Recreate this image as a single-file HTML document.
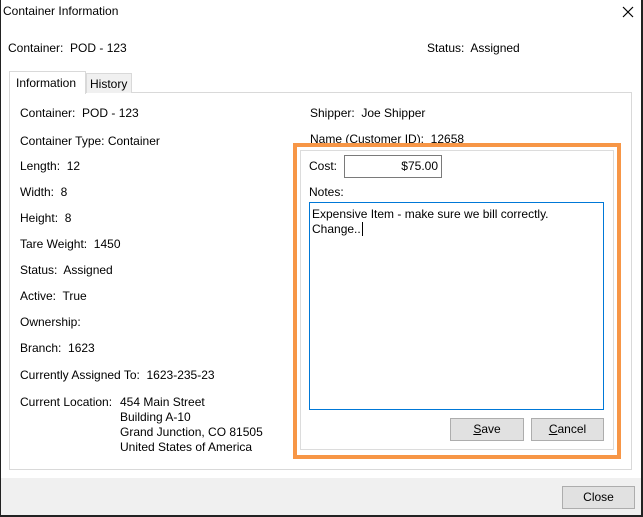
<!DOCTYPE html>
<html><head><style>
*{margin:0;padding:0;box-sizing:border-box}
body{width:643px;height:517px;background:#fff;font-family:"Liberation Sans",sans-serif;font-size:12px;color:#000;position:relative;overflow:hidden}
.a{position:absolute;white-space:nowrap}
.btn{position:absolute;background:#e1e1e1;border:1px solid #adadad;text-align:center;line-height:20px}
</style></head><body>
<div class="a" style="left:0;top:0;width:1px;height:517px;background:#222"></div>
<div class="a" style="left:641px;top:0;width:2px;height:517px;background:#222"></div>
<div class="a" style="left:0;top:515px;width:643px;height:2px;background:#222"></div>
<div class="a" style="left:3px;top:4px;font-size:12px">Container Information</div>
<svg class="a" style="left:622px;top:6px" width="12" height="12"><path d="M1 1L11 11M11 1L1 11" stroke="#000" stroke-width="1.2"/></svg>
<div class="a" style="left:8px;top:41px">Container:&nbsp; POD - 123</div>
<div class="a" style="left:427px;top:41px">Status:&nbsp; Assigned</div>
<div class="a" style="left:9px;top:92px;width:623px;height:378px;border:1px solid #d9d9d9"></div>
<div class="a" style="left:9px;top:71px;width:77px;height:23px;border:1px solid #d9d9d9;border-bottom:none;background:#fff;padding:4px 0 0 6px">Information</div>
<div class="a" style="left:86px;top:73px;width:46px;height:20px;border:1px solid #d9d9d9;border-bottom:none;background:#f0f0f0;padding:3px 0 0 3px">History</div>
<div class="a" style="left:20px;top:106px">Container:&nbsp; POD - 123</div>
<div class="a" style="left:20px;top:134px">Container Type: Container</div>
<div class="a" style="left:20px;top:159px">Length:&nbsp; 12</div>
<div class="a" style="left:20px;top:185px">Width:&nbsp; 8</div>
<div class="a" style="left:20px;top:211px">Height:&nbsp; 8</div>
<div class="a" style="left:20px;top:237px">Tare Weight:&nbsp; 1450</div>
<div class="a" style="left:20px;top:263px">Status:&nbsp; Assigned</div>
<div class="a" style="left:20px;top:289px">Active:&nbsp; True</div>
<div class="a" style="left:20px;top:315px">Ownership:</div>
<div class="a" style="left:20px;top:341px">Branch:&nbsp; 1623</div>
<div class="a" style="left:20px;top:368px">Currently Assigned To:&nbsp; 1623-235-23</div>
<div class="a" style="left:20px;top:395px">Current Location:</div>
<div class="a" style="left:120px;top:395px;line-height:15px">454 Main Street<br>Building A-10<br>Grand Junction, CO 81505<br>United States of America</div>
<div class="a" style="left:310px;top:106px">Shipper:&nbsp; Joe Shipper</div>
<div class="a" style="left:310px;top:132px">Name (Customer ID):&nbsp; 12658</div>
<div class="a" style="left:293px;top:143px;width:328px;height:316px;border:4px solid #f79646;background:#fff"></div>
<div class="a" style="left:300px;top:150px;width:314px;height:300px;border:1px solid #dcdcdc"></div>
<div class="a" style="left:309px;top:159px">Cost:</div>
<div class="a" style="left:344px;top:155px;width:98px;height:23px;border:1px solid #7a7a7a;text-align:right;padding:3px 3px 0 0">$75.00</div>
<div class="a" style="left:309px;top:185px">Notes:</div>
<div class="a" style="left:309px;top:202px;width:295px;height:208px;border:1px solid #0078d7;padding:4px 2px;line-height:15px">Expensive Item - make sure we bill correctly.<br>Change..<span style="border-left:1px solid #000;margin-left:1px"></span></div>
<div class="btn" style="left:450px;top:418px;width:74px;height:23px"><u>S</u>ave</div>
<div class="btn" style="left:531px;top:418px;width:73px;height:23px"><u>C</u>ancel</div>
<div class="a" style="left:1px;top:478px;width:640px;height:37px;background:#f0f0f0"></div>
<div class="btn" style="left:562px;top:486px;width:73px;height:23px">Close</div>
</body></html>
